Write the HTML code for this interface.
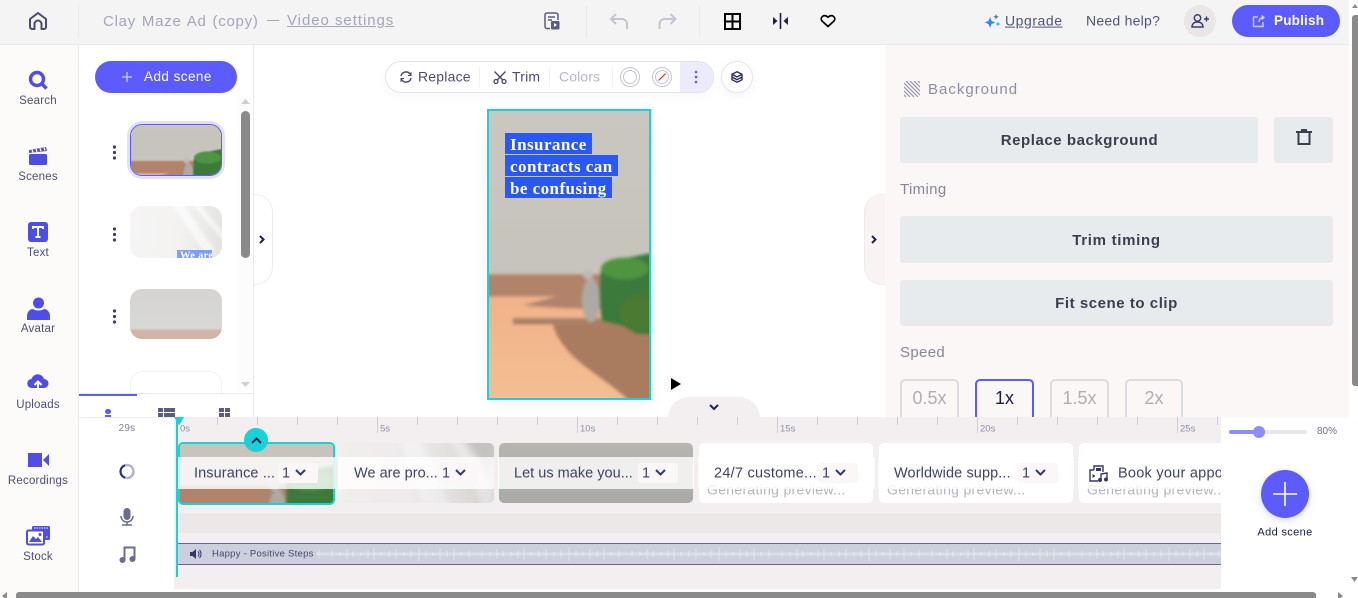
<!DOCTYPE html>
<html><head><meta charset="utf-8"><style>
html,body{margin:0;padding:0;width:1358px;height:598px;overflow:hidden;background:#fff;font-family:"Liberation Sans",sans-serif}
div,svg{position:absolute;box-sizing:border-box}
.t{position:absolute;white-space:nowrap;transform:translateY(-50%);line-height:1.2;margin-top:1px}
.c{text-align:center;transform:translate(-50%,-50%)}
.rail{font-size:11.5px;color:#4d4f73;letter-spacing:.2px;margin-top:2px}
.btn{background:#e7ebee;border-radius:3px}
.bt{font-size:15px;font-weight:bold;color:#3a3f50;letter-spacing:.55px}
.sp{top:379px;height:38px;border:2px solid #dcdcde;border-bottom:0;border-radius:5px 5px 0 0}
.spt{font-size:18px;color:#adadb2;top:398px}
.tk{width:1px;background:#cfcdd6;top:417px;height:8px}
.tl{width:1px;background:#cfcdd6;top:417px;height:16px}
.rl{font-size:9.5px;color:#8e8eaa;top:428px}
.clip{top:443px;height:60px;border-radius:5px;overflow:hidden;background:#fff}
.bar{top:457px;height:32px;background:rgba(255,255,255,.8)}
.lab{font-size:14.5px;color:#3f4268;top:472px;letter-spacing:.1px;margin-top:2px}
.sel{top:463px;width:40px;height:20px;background:#fbf7f6;border-radius:3px}
.gen{font-size:14px;color:#b4b4c2;top:489px;letter-spacing:.3px}
.ser{font:bold 17px 'Liberation Serif',serif;color:#fff;letter-spacing:.45px}
</style></head><body>
<svg width="0" height="0" style="position:absolute"><defs>
<linearGradient id="wall" x1="0" y1="0" x2="0" y2="1"><stop offset="0" stop-color="#cac7bf"/><stop offset="1" stop-color="#c3c1b9"/></linearGradient>
<linearGradient id="tab" x1="0" y1="0" x2="0" y2="1"><stop offset="0" stop-color="#efb088"/><stop offset="1" stop-color="#f5bd92"/></linearGradient>
<filter id="b" x="-10%" y="-10%" width="120%" height="120%"><feGaussianBlur stdDeviation="1.600"/></filter>
<filter id="b2" x="-20%" y="-20%" width="140%" height="140%"><feGaussianBlur stdDeviation="3"/></filter>
<pattern id="wave" width="150" height="22" patternUnits="userSpaceOnUse"><path d="M0 11H150" stroke="#fff" stroke-opacity=".3" stroke-width="3" fill="none"/><path d="M6 8v6M14 9v4M21 6v10M27 8v6M35 9v4M42 7v8M48 5v12M55 9v4M63 8v6M70 6v10M78 9v4M85 7v8M93 4v14M100 8v6M107 9v4M114 6v10M121 8v6M128 5v12M135 9v4M143 7v8" stroke="#fff" stroke-opacity=".35" stroke-width="1.200" fill="none"/></pattern>
<g id="scene">
<rect width="160" height="288" fill="url(#wall)"/>
<rect y="164" width="160" height="124" fill="url(#tab)"/>
<g filter="url(#b)">
<rect x="-5" y="164" width="170" height="22" fill="#b0836a"/>
<path d="M34 195L75 184H112V198H80Z" fill="#b0836a"/>
<rect x="24" y="208" width="140" height="6" fill="#a77f63"/>
<path d="M64 214H166V292H142C120 272 95 258 80 242C72 232 66 224 64 214Z" fill="#a97c61"/>
<circle cx="99" cy="164" r="5" fill="#bfbab3"/>
<ellipse cx="102" cy="190" rx="9" ry="22" fill="#aeaaa3"/>
<path d="M111 165C112 155 122 150 130 149L165 142V224H148L134 216L113 211C110 195 110 180 111 165Z" fill="#3a7a3a"/>
<ellipse cx="136" cy="158" rx="24" ry="11" fill="#4f9440"/>
<circle cx="149" cy="203" r="18" fill="#4b7a30"/>
</g></g>
</defs></svg>

<!-- base regions -->
<div style="left:0;top:44px;width:79px;height:554px;background:#fdfafa;border-right:1px solid #ebe8e8"></div>
<div style="left:253px;top:44px;width:1px;height:374px;background:#ebe8e8"></div>
<div style="left:885px;top:44px;width:464px;height:374px;background:#fbf7f6"></div>

<!-- top bar -->
<div style="left:0;top:0;width:1349px;height:45px;background:#f4f4f5;border-bottom:1px solid #e9e7e7"></div>
<svg style="left:28px;top:11px" width="20" height="20" viewBox="0 0 20 20" fill="none" stroke="#464a75" stroke-width="2" stroke-linejoin="round"><path d="M2 8L10 2l8 6v8a2 2 0 0 1-2 2h-2.500v-5a3.500 3.500 0 0 0-7 0v5H4a2 2 0 0 1-2-2z"/></svg>
<div style="left:78px;top:5px;width:1px;height:32px;background:#e8e8e8"></div>
<div class="t" style="left:103px;top:21px;font-size:15px;color:#a3a5bb;letter-spacing:.75px;word-spacing:1px">Clay Maze Ad (copy)</div>
<div style="left:267px;top:20px;width:12px;height:1px;background:#a3a5bb"></div>
<div class="t" style="left:287px;top:19.500px;font-size:15px;color:#a3a5bb;letter-spacing:.95px;text-decoration:underline">Video settings</div>

<svg style="left:544px;top:12px" width="16" height="18" viewBox="0 0 16 18" fill="none" stroke="#5a5d80" stroke-width="1.500"><path d="M6 16.500H3a2 2 0 0 1-2-2V3a2 2 0 0 1 2-2h9a2 2 0 0 1 2 2v5"/><path d="M4 5h7M4 8h4"/><rect x="7" y="9" width="8.500" height="8.500" rx="1" fill="#5a5d80" stroke="none"/><path d="M10 11l3 2-3 2z" fill="#fff" stroke="none"/></svg>
<div style="left:586px;top:5px;width:1px;height:32px;background:#e8e8e8"></div>
<div style="left:699px;top:5px;width:1px;height:32px;background:#e8e8e8"></div>
<svg style="left:609px;top:13px" width="20" height="17" viewBox="0 0 20 17" fill="none" stroke="#c4c5d0" stroke-width="2"><path d="M7 1L2 6l5 5M2 6h11a5 5 0 0 1 5 5v5"/></svg>
<svg style="left:657px;top:13px" width="21" height="17" viewBox="0 0 20 17" fill="none" stroke="#c4c5d0" stroke-width="2"><path d="M13 1l5 5-5 5M18 6H7a5 5 0 0 0-5 5v5"/></svg>
<svg style="left:724px;top:13px" width="17" height="17" viewBox="0 0 17 17" fill="none" stroke="#000" stroke-width="2"><rect x="1" y="1" width="15" height="15"/><path d="M8.500 1v15M1 8.500h15"/></svg>
<svg style="left:773px;top:13px" width="15" height="16" viewBox="0 0 15 16" fill="#1a2050"><rect x="6.700" y="0" width="1.600" height="16"/><path d="M0 4l4.500 4L0 12zM15 4l-4.500 4 4.500 4z"/></svg>
<svg style="left:820px;top:14px" width="16" height="14" viewBox="0 0 16 14" fill="none" stroke="#000" stroke-width="1.700"><path d="M8 12.500L2 7C-.5 3.800 3.500-.5 8 3.200 12.500-.5 16.500 3.800 14 7z"/></svg>

<svg style="left:984px;top:14px" width="17" height="15" viewBox="0 0 17 15"><path d="M6 3l1.500 4 4 1.500-4 1.500L6 14l-1.500-4-4-1.500 4-1.500z" fill="#2a8bf0"/><path d="M12 0l.8 2 2 .8-2 .8-.8 2-.8-2-2-.8 2-.8z" fill="#3a6ff0"/><circle cx="14" cy="10" r="1.500" fill="#22c3d8"/></svg>
<div class="t" style="left:1005px;top:20px;font-size:14px;color:#50547c;letter-spacing:.55px;text-decoration:underline">Upgrade</div>
<div class="t" style="left:1086px;top:20px;font-size:14px;color:#50547c;letter-spacing:.25px">Need help?</div>
<div style="left:1184px;top:5px;width:32px;height:32px;border-radius:50%;background:#eae6e6"></div>
<svg style="left:1191px;top:14px" width="19" height="14" viewBox="0 0 19 14" fill="none" stroke="#3a3e6c" stroke-width="1.500"><circle cx="6.500" cy="4" r="3.200"/><path d="M1 13c0-3 2-5 5.500-5S12 10 12 13zM13 5h5M15.500 2.500v5"/></svg>
<div style="left:1232px;top:5px;width:108px;height:32px;border-radius:16px;background:#5b5bff"></div>
<svg style="left:1252px;top:15px" width="13" height="13" viewBox="0 0 13 13" fill="none" stroke="#c9c9ff" stroke-width="1.500"><path d="M6 2H1.500v9.500H11V7M7 7c0-3 2-4.500 5-4.500M9.500.5l2.500 2-2.500 2"/></svg>
<div class="t" style="left:1274px;top:20px;font-size:13.500px;font-weight:bold;color:#fff;letter-spacing:.2px">Publish</div>

<!-- rail -->
<svg style="left:28px;top:70px" width="20" height="20" viewBox="0 0 20 20" fill="none" stroke="#4f4de8" stroke-width="3.400"><circle cx="9" cy="9" r="6.500"/><path d="M14 14l4.500 4.500"/></svg>
<div class="t c rail" style="left:38px;top:100px">Search</div>
<svg style="left:28px;top:146px" width="20" height="20" viewBox="0 0 20 20"><rect x="1" y="8" width="18" height="11" rx="1.500" fill="#4f4de8"/><path d="M1 4l17-3 1 4-18 2z" fill="#4f4de8"/><path d="M4 3.500l1 3M8 3l1 3M12 2.200l1 3M16 1.500l1 3" stroke="#fff" stroke-width="1.200"/></svg>
<div class="t c rail" style="left:38px;top:176px">Scenes</div>
<div style="left:28px;top:222px;width:20px;height:20px;border-radius:3px;background:#4f4de8"></div>
<svg style="left:28px;top:222px" width="20" height="20" viewBox="0 0 20 20" fill="none" stroke="#fff" stroke-width="2"><path d="M5 7V5h10v2M10 5v10M7.500 15h5"/></svg>
<div class="t c rail" style="left:38px;top:252px">Text</div>
<svg style="left:27px;top:297px" width="23" height="23" viewBox="0 0 23 23" fill="#4f4de8"><circle cx="11.500" cy="6" r="5.500"/><path d="M0 23v-4c0-4 3-7 6-7 2 2 9 2 11 0 3 0 6 3 6 7v4z"/></svg>
<div class="t c rail" style="left:38px;top:328px">Avatar</div>
<svg style="left:27px;top:373px" width="22" height="22" viewBox="0 0 22 22" fill="#4f4de8"><path d="M5 15a4.500 4.500 0 0 1-.5-9 6.500 6.500 0 0 1 12.500 0 4.500 4.500 0 0 1 0 9z"/><path d="M11 21V9M7.500 12L11 8.500l3.500 3.500" stroke="#fff" stroke-width="2" fill="none"/></svg>
<div class="t c rail" style="left:38px;top:404px">Uploads</div>
<svg style="left:28px;top:453px" width="21" height="14" viewBox="0 0 21 14" fill="#4f4de8"><rect width="14" height="14"/><path d="M15 7l6-6v12z"/></svg>
<div class="t c rail" style="left:38px;top:480px">Recordings</div>
<svg style="left:26px;top:526px" width="25" height="20" viewBox="0 0 25 20"><rect x="6" y="0" width="18" height="14" rx="1.500" fill="#4f4de8"/><path d="M8 2h14M20 11h2" stroke="#fff" stroke-dasharray="1.500 1"/><rect x="1" y="4.500" width="17" height="14" rx="1.500" fill="#fff" stroke="#4f4de8" stroke-width="2"/><path d="M3 16l4-6 3 3 2-2 4 5z" fill="#4f4de8"/><circle cx="14" cy="8.500" r="1.500" fill="#4f4de8"/></svg>
<div class="t c rail" style="left:38px;top:556px">Stock</div>

<!-- scenes panel -->
<div style="left:95px;top:61px;width:142px;height:32px;border-radius:16px;background:#5b5bff"></div>
<svg style="left:121px;top:71px" width="12" height="12" viewBox="0 0 12 12" stroke="#cfcfff" stroke-width="1.300"><path d="M6 1v10M1 6h10"/></svg>
<div class="t" style="left:144px;top:76px;font-size:13.500px;color:#fff;letter-spacing:.45px">Add scene</div>

<div style="left:238px;top:96px;width:13px;height:294px;background:#fcfcfc"></div>
<svg style="left:241px;top:99px" width="9" height="6"><path d="M4.500 0L9 5H0z" fill="#cfcfcf"/></svg>
<div style="left:241px;top:111px;width:9px;height:147px;background:#8a8a8a;border-radius:5px"></div>
<svg style="left:241px;top:381px" width="9" height="6"><path d="M4.500 6L9 1H0z" fill="#cfcfcf"/></svg>

<svg style="left:112px;top:145px" width="5" height="15" fill="#3a3e6c"><circle cx="2.500" cy="2" r="1.600"/><circle cx="2.500" cy="7.500" r="1.600"/><circle cx="2.500" cy="13" r="1.600"/></svg>
<svg style="left:112px;top:227px" width="5" height="15" fill="#3a3e6c"><circle cx="2.500" cy="2" r="1.600"/><circle cx="2.500" cy="7.500" r="1.600"/><circle cx="2.500" cy="13" r="1.600"/></svg>
<svg style="left:112px;top:309px" width="5" height="15" fill="#3a3e6c"><circle cx="2.500" cy="2" r="1.600"/><circle cx="2.500" cy="7.500" r="1.600"/><circle cx="2.500" cy="13" r="1.600"/></svg>

<div style="left:127px;top:121px;width:98px;height:58px;border-radius:15px;background:#e1e1fd"></div>
<div style="left:130px;top:124px;width:92px;height:52px;border-radius:12px;overflow:hidden;border:1px solid #5b5bf5">
<svg style="left:0;top:0" width="90" height="50" viewBox="0 100 160 89" preserveAspectRatio="none"><use href="#scene"/></svg></div>

<div style="left:130px;top:206px;width:92px;height:52px;border-radius:12px;overflow:hidden;background:linear-gradient(100deg,#f6f5f5 0%,#f3f2f1 55%,#e3e2e0 100%)">
<svg style="left:0;top:0" width="92" height="52"><path d="M40 -4h12l34 50H74zM60 -4h8l28 34v8z" fill="#fff" opacity=".6" filter="url(#b)"/></svg>
<div style="left:47px;top:44px;width:35px;height:8px;background:#7f9efb;overflow:hidden"><span class="t" style="left:3px;top:6px;margin:0;font:bold 10.500px 'Liberation Serif',serif;color:#fff;letter-spacing:.3px">We are</span></div></div>

<div style="left:130px;top:289px;width:92px;height:50px;border-radius:12px;overflow:hidden;background:linear-gradient(#d5d4d2,#d8d8d6 78%,#d0b5a6 84%,#d3b4a4)"></div>
<div style="left:130px;top:371px;width:92px;height:24px;border:1px solid #f3f2f2;border-bottom:0;border-radius:12px 12px 0 0"></div>

<div style="left:79px;top:393px;width:174px;height:1px;background:#e8e8ea"></div>
<div style="left:79px;top:394px;width:58px;height:2px;background:#5b5bff"></div>
<div style="left:105px;top:409px;width:6px;height:5px;background:#5b5bff;border-radius:3px"></div>
<div style="left:105px;top:415px;width:6px;height:2px;background:#5b5bff"></div>
<div style="left:158px;top:408px;width:5px;height:4px;background:#5a5d80"></div><div style="left:164px;top:408px;width:11px;height:4px;background:#5a5d80"></div>
<div style="left:158px;top:413px;width:5px;height:4px;background:#5a5d80"></div><div style="left:164px;top:413px;width:11px;height:4px;background:#5a5d80"></div>
<div style="left:219px;top:408px;width:5px;height:4px;background:#5a5d80"></div><div style="left:225px;top:408px;width:5px;height:4px;background:#5a5d80"></div>
<div style="left:219px;top:413px;width:5px;height:4px;background:#5a5d80"></div><div style="left:225px;top:413px;width:5px;height:4px;background:#5a5d80"></div>

<!-- collapse tabs -->
<div style="left:254px;top:194px;width:19px;height:91px;background:#fff;border:1px solid #ededee;border-left:0;border-radius:0 18px 18px 0"></div>
<svg style="left:259px;top:235px" width="6" height="9" fill="none" stroke="#1f2350" stroke-width="2"><path d="M1 1l3.500 3.500L1 8"/></svg>
<div style="left:864px;top:194px;width:21px;height:91px;background:#f9f4f3;border:1px solid #efebea;border-right:0;border-radius:18px 0 0 18px"></div>
<svg style="left:871px;top:235px" width="6" height="9" fill="none" stroke="#1f2350" stroke-width="2"><path d="M1 1l3.500 3.500L1 8"/></svg>

<!-- toolbar -->
<div style="left:385px;top:61px;width:329px;height:32px;border-radius:16px;border:1px solid #e4e4e8;background:#fff;box-shadow:0 4px 12px rgba(0,0,0,.03);overflow:hidden"><div style="right:0;top:0;width:33px;height:32px;background:#ecebfd"></div></div>
<svg style="left:400px;top:71px" width="12" height="12" viewBox="0 0 12 12" fill="none" stroke="#44486f" stroke-width="1.400"><path d="M1 5a5 5 0 0 1 9-2l1 1.500M11 7a5 5 0 0 1-9 2L1 7.500"/><path d="M11 1v3.500H8M1 11V7.500h3" stroke-width="1"/></svg>
<div class="t" style="left:418px;top:75.500px;font-size:14px;color:#4b4e74;letter-spacing:.2px">Replace</div>
<div style="left:479px;top:67px;width:1px;height:20px;background:#f8eeee"></div>
<svg style="left:493px;top:71px" width="14" height="13" viewBox="0 0 14 13" fill="none" stroke="#44486f" stroke-width="1.300"><circle cx="3" cy="10.500" r="2"/><circle cx="11" cy="10.500" r="2"/><path d="M1.500 0.500L9.800 9M12.500 .500L4.200 9"/></svg>
<div class="t" style="left:512px;top:75.500px;font-size:14px;color:#4b4e74;letter-spacing:.2px">Trim</div>
<div style="left:549px;top:67px;width:1px;height:20px;background:#f8eeee"></div>
<div class="t" style="left:559px;top:75.500px;font-size:14px;color:#b5b7c8;letter-spacing:.1px">Colors</div>
<div style="left:612px;top:67px;width:1px;height:20px;background:#f8eeee"></div>
<div style="left:620px;top:67px;width:20px;height:20px;border-radius:50%;border:1px solid #c4c5d2"><div style="left:2px;top:2px;width:14px;height:14px;border-radius:50%;border:1px solid #c4c5d2"></div></div>
<div style="left:652px;top:67px;width:20px;height:20px;border-radius:50%;border:1px solid #c4c5d2"><div style="left:2px;top:2px;width:14px;height:14px;border-radius:50%;border:1px solid #c4c5d2"></div></div>
<svg style="left:652px;top:67px" width="20" height="20"><path d="M6.500 13.500l7-7" stroke="#f22" stroke-width="1.200"/></svg>
<svg style="left:694px;top:70px" width="4" height="14" fill="#5b5bff"><circle cx="2" cy="2" r="1.300"/><circle cx="2" cy="7" r="1.300"/><circle cx="2" cy="12" r="1.300"/></svg>
<div style="left:721px;top:61px;width:32px;height:32px;border-radius:50%;border:1px solid #e6e6ea;background:#fff;box-shadow:0 3px 10px rgba(0,0,0,.05)"></div>
<svg style="left:731px;top:71px" width="12" height="12" viewBox="0 0 12 12" fill="none" stroke="#2b2f5e" stroke-width="1.400"><path d="M6 .800L11 3.300v5.400L6 11.200 1 8.700V3.300zM1 3.300L6 6l5-2.700M1 6l5 2.700L11 6"/></svg>

<!-- preview -->
<div style="left:487px;top:109px;width:164px;height:291px;border:2px solid #17d2d8;box-shadow:0 4px 14px rgba(0,0,0,.06);background:#ccc;overflow:hidden">
<svg style="left:0;top:0" width="160" height="287" viewBox="0 0 160 288" preserveAspectRatio="none"><use href="#scene"/></svg></div>
<div style="left:505px;top:133px;width:87px;height:21px;background:#2a58f8"></div>
<div style="left:505px;top:155px;width:113px;height:21px;background:#2a58f8"></div>
<div style="left:505px;top:177px;width:107px;height:21px;background:#2a58f8"></div>
<div class="t ser" style="left:510px;top:144px">Insurance</div>
<div class="t ser" style="left:510px;top:166px">contracts can</div>
<div class="t ser" style="left:510px;top:188px">be confusing</div>
<svg style="left:671px;top:378px" width="10" height="12"><path d="M0 0l10 6-10 6z" fill="#000"/></svg>
<div style="left:668px;top:397px;width:92px;height:21px;background:#f3eff0;border-radius:24px 24px 0 0"></div>
<svg style="left:709px;top:404px" width="10" height="7" fill="none" stroke="#1f2350" stroke-width="2"><path d="M1 1l4 4 4-4"/></svg>

<!-- right panel -->
<svg style="left:904px;top:81px" width="16" height="16" viewBox="0 0 16 16" stroke="#8f90a8" stroke-width="1.100"><path d="M0 2l14 14M0 6l10 10M0 10l6 6M0 14l2 2M2 0l14 14M6 0l10 10M10 0l6 6M14 0l2 2"/></svg>
<div class="t" style="left:928px;top:88.500px;font-size:15px;color:#8b8da5;letter-spacing:1px">Background</div>
<div class="btn" style="left:900px;top:117px;width:358px;height:46px"></div>
<div class="t c bt" style="left:1079.500px;top:140px">Replace background</div>
<div class="btn" style="left:1274px;top:117px;width:59px;height:46px"></div>
<svg style="left:1296px;top:128px" width="16" height="17" viewBox="0 0 16 17" fill="none" stroke="#3a3f50" stroke-width="2"><path d="M0 4h16M5 2h6M2.500 4v12h11V4"/></svg>
<div class="t" style="left:900px;top:189px;font-size:15px;color:#85869a;letter-spacing:.35px">Timing</div>
<div class="btn" style="left:900px;top:216px;width:433px;height:47px"></div>
<div class="t c bt" style="left:1116.500px;top:240px;letter-spacing:.7px">Trim timing</div>
<div class="btn" style="left:900px;top:280px;width:433px;height:46px"></div>
<div class="t c bt" style="left:1116.500px;top:303px">Fit scene to clip</div>
<div class="t" style="left:900px;top:352px;font-size:15px;color:#85869a;letter-spacing:.35px">Speed</div>
<div class="sp" style="left:900px;width:59px"></div><div class="t c spt" style="left:929.500px">0.5x</div>
<div class="sp" style="left:975px;width:59px;border-color:#5b5bff"></div><div class="t c spt" style="left:1004.500px;color:#1a1d45">1x</div>
<div class="sp" style="left:1050px;width:59px"></div><div class="t c spt" style="left:1079.500px">1.5x</div>
<div class="sp" style="left:1125px;width:58px"></div><div class="t c spt" style="left:1154px">2x</div>

<!-- timeline -->
<div style="left:79px;top:417px;width:96px;height:172px;background:#fff"></div>
<div style="left:174px;top:417px;width:1047px;height:172px;background:#f3eff0"></div>
<div style="left:79px;top:417px;width:96px;height:1px;background:#eceaea"></div>
<div class="t c" style="left:127px;top:428px;font-size:10px;color:#7e7f9c;letter-spacing:.2px">29s</div>
<div class="tl" style="left:177px"></div><div class="tk" style="left:217px"></div><div class="tk" style="left:257px"></div><div class="tk" style="left:297px"></div><div class="tk" style="left:337px"></div>
<div class="tl" style="left:377px"></div><div class="tk" style="left:417px"></div><div class="tk" style="left:457px"></div><div class="tk" style="left:497px"></div><div class="tk" style="left:537px"></div>
<div class="tl" style="left:577px"></div><div class="tk" style="left:617px"></div><div class="tk" style="left:657px"></div><div class="tk" style="left:697px"></div><div class="tk" style="left:737px"></div>
<div class="tl" style="left:777px"></div><div class="tk" style="left:817px"></div><div class="tk" style="left:857px"></div><div class="tk" style="left:897px"></div><div class="tk" style="left:937px"></div>
<div class="tl" style="left:977px"></div><div class="tk" style="left:1017px"></div><div class="tk" style="left:1057px"></div><div class="tk" style="left:1097px"></div><div class="tk" style="left:1137px"></div>
<div class="tl" style="left:1177px"></div><div class="tk" style="left:1217px"></div>
<div class="t rl" style="left:180px">0s</div><div class="t rl" style="left:380px">5s</div><div class="t rl" style="left:580px">10s</div><div class="t rl" style="left:780px">15s</div><div class="t rl" style="left:980px">20s</div><div class="t rl" style="left:1180px">25s</div>

<!-- clips -->
<div class="clip" style="left:178px;top:442px;width:157px;height:63px;border:2px solid #17d2d8"><svg style="left:0;top:0" width="153" height="59" viewBox="0 120 160 62" preserveAspectRatio="none"><use href="#scene"/></svg></div>
<div class="clip" style="left:339px;width:155px;background:linear-gradient(90deg,#f1eeed 0%,#eeebea 45%,#d5d3d0 100%)"><svg style="left:0;top:0" width="155" height="60"><path d="M60 -5h22l30 70H85zM110 -5h12l32 50v20h-8z" fill="#fff" opacity=".35" filter="url(#b2)"/><path d="M125 -5h30v40z" fill="#bdbab7" opacity=".7" filter="url(#b2)"/></svg></div>
<div class="clip" style="left:499px;width:194px;background:linear-gradient(#b7b4af,#a9aaa6)"></div>
<div class="clip" style="left:699px;width:174px"></div>
<div class="clip" style="left:879px;width:194px"></div>
<div class="clip" style="left:1079px;width:160px"></div>
<div class="t gen" style="left:707px">Generating preview...</div>
<div class="t gen" style="left:887px">Generating preview...</div>
<div class="t gen" style="left:1087px">Generating preview...</div>
<div class="bar" style="left:178px;width:157px"></div>
<div class="bar" style="left:338px;width:156px"></div>
<div class="bar" style="left:498px;width:196px"></div>
<div class="bar" style="left:698px;width:177px"></div>
<div class="bar" style="left:878px;width:196px"></div>
<div class="bar" style="left:1078px;width:160px"></div>
<div class="sel" style="left:278px"></div><div class="sel" style="left:438px"></div><div class="sel" style="left:638px"></div><div class="sel" style="left:818px"></div><div class="sel" style="left:1018px"></div>
<div class="t lab" style="left:194px">Insurance ...</div>
<div class="t lab" style="left:354px;letter-spacing:.02px">We are pro...</div>
<div class="t lab" style="left:514px;letter-spacing:.02px">Let us make you...</div>
<div class="t lab" style="left:714px;letter-spacing:.25px">24/7 custome...</div>
<div class="t lab" style="left:894px">Worldwide supp...</div>
<div class="t lab" style="left:1118px;letter-spacing:.25px">Book your appo</div>
<div class="t lab" style="left:282px">1</div><div class="t lab" style="left:442px">1</div><div class="t lab" style="left:642px">1</div><div class="t lab" style="left:822px">1</div><div class="t lab" style="left:1022px">1</div>
<svg style="left:295px;top:469px" width="11" height="8" fill="none" stroke="#34376a" stroke-width="2"><path d="M1 1l4.500 4.500L10 1"/></svg>
<svg style="left:455px;top:469px" width="11" height="8" fill="none" stroke="#34376a" stroke-width="2"><path d="M1 1l4.500 4.500L10 1"/></svg>
<svg style="left:655px;top:469px" width="11" height="8" fill="none" stroke="#34376a" stroke-width="2"><path d="M1 1l4.500 4.500L10 1"/></svg>
<svg style="left:835px;top:469px" width="11" height="8" fill="none" stroke="#34376a" stroke-width="2"><path d="M1 1l4.500 4.500L10 1"/></svg>
<svg style="left:1035px;top:469px" width="11" height="8" fill="none" stroke="#34376a" stroke-width="2"><path d="M1 1l4.500 4.500L10 1"/></svg>
<svg style="left:1089px;top:465px" width="19" height="17" viewBox="0 0 19 17" fill="none" stroke="#34376a" stroke-width="1.400"><path d="M5 5V1h9v6M5 5H1v11h8"/><path d="M7 3h5v3H7z" fill="#34376a" stroke="none"/><path d="M3.500 9l3 2-3 2z" fill="#34376a" stroke="none"/><path d="M12 15V9l6-1v6"/><circle cx="11" cy="15" r="1.300" fill="#34376a"/><circle cx="17" cy="14.500" r="1.300" fill="#34376a"/></svg>

<div style="left:177px;top:513px;width:1044px;height:20px;background:#ece8e7"></div>
<svg style="left:176px;top:543px" width="1045" height="22"><rect width="1045" height="22" fill="#cccfdc"/><rect x="140" width="905" height="22" fill="url(#wave)"/><rect width="1045" height="1" fill="#66668f"/><rect y="21" width="1045" height="1" fill="#66668f"/></svg>
<svg style="left:190px;top:549px" width="12" height="10" viewBox="0 0 12 10" fill="#34376a"><path d="M0 3h2.500L6 0v10L2.500 7H0z"/><path d="M8 2.500a3.500 3.500 0 0 1 0 5M9.500 1a6 6 0 0 1 0 8" fill="none" stroke="#34376a"/></svg>
<div class="t" style="left:212px;top:553px;font-size:9.500px;color:#44476f;letter-spacing:.25px">Happy - Positive Steps</div>

<svg style="left:119px;top:463px" width="16" height="17" viewBox="0 0 16 17"><circle cx="8" cy="8.500" r="6.500" fill="none" stroke="#b1b2cb" stroke-width="2.400"/><path d="M6 2.300a6.500 6.500 0 0 0 0 12.400" fill="none" stroke="#2b2f5e" stroke-width="2"/></svg>
<svg style="left:120px;top:508px" width="14" height="18" viewBox="0 0 14 18" fill="#6b6d8e"><rect x="3.500" y="0" width="7" height="12" rx="3.500"/><path d="M1 8a6 6 0 0 0 12 0M7 14v3M2 17h10" fill="none" stroke="#6b6d8e" stroke-width="1.500"/></svg>
<svg style="left:119px;top:546px" width="17" height="17" viewBox="0 0 17 17" fill="#6b6d8e"><circle cx="3.500" cy="14" r="3"/><circle cx="13.500" cy="13" r="3"/><path d="M5.500 14V1.500H15.500V13" fill="none" stroke="#6b6d8e" stroke-width="2"/></svg>

<!-- playhead + marker -->
<div style="left:176px;top:417px;width:2px;height:160px;background:#17d2d8"></div>
<svg style="left:174px;top:417px" width="10" height="9"><path d="M0 0h10L5 8.500z" fill="#17d2d8"/></svg>
<div style="left:244px;top:428px;width:24px;height:24px;border-radius:50%;background:#17d2d8"></div>
<svg style="left:251px;top:437px" width="11" height="7" fill="none" stroke="#14204f" stroke-width="2"><path d="M1 6l4.500-4.500L10 6"/></svg>

<!-- right timeline controls -->
<div style="left:1221px;top:418px;width:128px;height:171px;background:#fff"></div>
<div style="left:1229px;top:430px;width:78px;height:4px;border-radius:2px;background:#e7e7ec"></div>
<div style="left:1229px;top:430px;width:30px;height:4px;border-radius:2px;background:#8d8dff"></div>
<div style="left:1253px;top:426px;width:12px;height:12px;border-radius:50%;background:#8d8dff"></div>
<div class="t" style="left:1317px;top:431px;font-size:10px;color:#6e7092">80%</div>
<div style="left:1261px;top:470px;width:48px;height:48px;border-radius:50%;background:#5b5bff;box-shadow:0 2px 8px rgba(91,91,255,.25)"></div>
<svg style="left:1273px;top:482px" width="24" height="24" stroke="#fff" stroke-width="1.600"><path d="M12 0v24M0 12h24"/></svg>
<div class="t c" style="left:1285px;top:532px;font-size:11px;color:#1a1d45;letter-spacing:.35px">Add scene</div>

<!-- scrollbars -->
<div style="left:1349px;top:0;width:9px;height:598px;background:#fff"></div>
<svg style="left:1352px;top:3px" width="6" height="6"><path d="M3 1l3 4H0z" fill="#8a8a8a"/></svg>
<div style="left:1352px;top:15px;width:6px;height:371px;background:#8a8a8a;border-radius:3px 0 0 3px"></div>
<svg style="left:1351px;top:577px" width="7" height="6"><path d="M0 0h7L3.500 5z" fill="#8a8a8a"/></svg>
<svg style="left:2px;top:592px" width="6" height="6"><path d="M5 0L0 4l5 4z" fill="#8a8a8a"/></svg>
<div style="left:16px;top:592px;width:1300px;height:6px;background:#8a8a8a;border-radius:3px 3px 0 0"></div>
<svg style="left:1338px;top:592px" width="6" height="6"><path d="M0 0l5 4-5 4z" fill="#8a8a8a"/></svg>
</body></html>
